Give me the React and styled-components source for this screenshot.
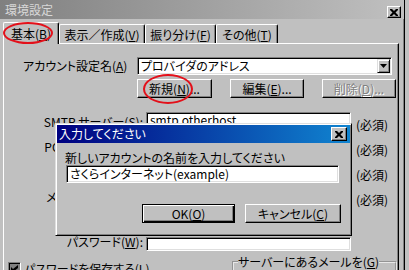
import React from "react";
import styled, { createGlobalStyle } from "styled-components";

const GlobalStyle = createGlobalStyle`
  html, body { margin: 0; padding: 0; background: #c0c0c0; }
  body {
    font-family: "Noto Sans CJK JP", "Liberation Sans", sans-serif;
    font-size: 12px;
    color: #000;
  }
`;

const Win = styled.div`
  position: relative;
  width: 405px;
  height: 270px;
  overflow: hidden;
  box-sizing: border-box;
  background: #c0c0c0;
  border-right: 1px solid #000;
  box-shadow: inset -1px 0 #808080;
  display: flex;
  flex-direction: column;
  line-height: 14px;
  font-feature-settings: "palt";
`;

const TitleBar = styled.div`
  flex: none;
  height: ${p => p.$h}px;
  display: flex;
  align-items: center;
  justify-content: space-between;
  padding: 0 3px 0 ${p => p.$pl}px;
  background: ${p => p.$active
    ? "linear-gradient(90deg, #000080, #1084d0)"
    : "linear-gradient(90deg, #808080, #c0c0c0)"};
  color: ${p => p.$active ? "#fff" : "#d8d8d8"};
  white-space: nowrap;
`;

const CloseBtn = styled.div`
  width: ${p => p.$w}px;
  height: ${p => p.$h}px;
  box-sizing: border-box;
  align-self: ${p => p.$bottom ? "flex-end" : "center"};
  margin-bottom: ${p => p.$bottom ? 1 : 0}px;
  background: #c0c0c0;
  border: 1px solid;
  border-color: #fff #000 #000 #fff;
  box-shadow: inset -1px -1px #808080;
  display: flex;
  align-items: center;
  justify-content: center;
`;

const XMark = () => (
  <svg width="8" height="7" viewBox="0 0 8 7">
    <path d="M0 0h2l2 2 2-2h2v1L5.5 3.5 8 6v1H6L4 5 2 7H0V6l2.5-2.5L0 1z" fill="#000" />
  </svg>
);

const TabStrip = styled.div`
  flex: none;
  height: 24px;
  display: flex;
  align-items: flex-end;
  padding-left: 3px;
  position: relative;
  z-index: 1;
`;

const Tab = styled.div`
  width: ${p => p.$w}px;
  height: ${p => p.$active ? 22 : 19}px;
  margin-bottom: ${p => p.$active ? -1 : 0}px;
  box-sizing: border-box;
  background: #c0c0c0;
  border-top: 1px solid #fff;
  border-left: 1px solid #fff;
  border-right: 1px solid #000;
  border-radius: 2px 2px 0 0;
  box-shadow: inset -1px 0 #808080;
  display: flex;
  align-items: center;
  justify-content: center;
  padding-top: ${p => p.$active ? 0 : 1}px;
  white-space: nowrap;
`;

const Panel = styled.div`
  flex: 1;
  margin-left: 3px;
  width: 396px;
  box-sizing: border-box;
  border-top: 1px solid #fff;
  border-left: 1px solid #fff;
  border-right: 1px solid #000;
  box-shadow: inset -1px 0 #808080;
`;

const AccountRow = styled.div`
  display: flex;
  align-items: center;
  margin-top: 13px;
  padding-left: 19px;
`;

const RowLabel = styled.div`
  width: 114px;
  white-space: nowrap;
`;

const Sunken = styled.div`
  box-sizing: border-box;
  width: ${p => p.$w}px;
  height: ${p => p.$h}px;
  background: #fff;
  border: 1px solid;
  border-color: #808080 #fff #fff #808080;
  box-shadow: inset 1px 1px #000, inset -1px -1px #dfdfdf;
  padding: 0 2px 0 3px;
  display: flex;
  align-items: center;
  white-space: nowrap;
  overflow: hidden;
  margin-left: ${p => p.$ml || 0}px;
`;

const ComboText = styled.div`
  flex: 1;
  line-height: 12px;
`;

const DropBtn = styled.div`
  width: 13px;
  height: 14px;
  box-sizing: border-box;
  background: #c0c0c0;
  border: 1px solid;
  border-color: #dfdfdf #000 #000 #dfdfdf;
  box-shadow: inset 1px 1px #fff, inset -1px -1px #808080;
  display: flex;
  align-items: center;
  justify-content: center;
  margin-right: -1px;
`;

const ButtonRow = styled.div`
  display: flex;
  gap: 18px;
  margin-top: 4px;
  padding-left: 133px;
`;

const Button = styled.div`
  width: ${p => p.$w}px;
  height: 19px;
  box-sizing: border-box;
  background: #c0c0c0;
  border: 1px solid;
  border-color: ${p => p.$default ? "#000" : "#fff #000 #000 #fff"};
  box-shadow: ${p => p.$default
    ? "inset 1px 1px #fff, inset -1px -1px #000, inset -2px -2px #808080"
    : "inset -1px -1px #808080"};
  display: flex;
  align-items: center;
  justify-content: center;
  white-space: nowrap;
  color: ${p => p.$disabled ? "#808080" : "#000"};
  text-shadow: ${p => p.$disabled ? "1px 1px #fff" : "none"};
`;

const U = styled.span`
  text-decoration: underline;
  text-underline-offset: 1px;
`;

const FieldGrid = styled.div`
  display: grid;
  grid-template-columns: 142px 205px 1fr;
  grid-auto-rows: 14px;
  row-gap: 11px;
  margin-top: 14px;
`;

const FieldLabel = styled.div`
  text-align: right;
  padding-right: 3px;
  white-space: nowrap;
  margin-top: ${p => p.$dy}px;
`;

const FieldText = styled.div`
  line-height: 11px;
  padding-top: 0;
`;

const Required = styled.div`
  padding-left: 5px;
  padding-top: 6px;
  white-space: nowrap;
`;

const BottomRow = styled.div`
  display: flex;
  align-items: flex-start;
  margin-top: 11px;
  padding-left: 4px;
`;

const CheckLabel = styled.div`
  display: flex;
  gap: 3px;
  white-space: nowrap;
`;

const CheckBox = styled.div`
  width: 13px;
  height: 13px;
  box-sizing: border-box;
  background: #808080;
  border: 1px solid;
  border-color: #808080 #fff #fff #808080;
  box-shadow: inset 1px 1px #000;
  display: flex;
  align-items: center;
  justify-content: center;
`;

const GroupBox = styled.fieldset`
  margin: -7px 1px 0 auto;
  width: 165px;
  height: 40px;
  box-sizing: border-box;
  padding: 0 4px;
  border: 2px groove #e8e8e8;
  & > legend {
    padding: 0;
    line-height: 14px;
  }
`;

const Dialog = styled.div`
  position: absolute;
  left: 55px;
  top: 123px;
  width: 297px;
  height: 113px;
  box-sizing: border-box;
  background: #c0c0c0;
  border: 1px solid;
  border-color: #dfdfdf #000 #000 #dfdfdf;
  box-shadow: inset 1px 1px #fff, inset -1px -1px #808080;
  padding: 1px;
  display: flex;
  flex-direction: column;
  z-index: 2;
`;

const DialogBody = styled.div`
  padding: 8px 9px 0 8px;
  display: flex;
  flex-direction: column;
`;

const DialogButtons = styled.div`
  display: flex;
  justify-content: flex-end;
  gap: 10px;
  margin-top: 21px;
`;

const Ellipse = styled.div`
  position: absolute;
  left: ${p => p.$x}px;
  top: ${p => p.$y}px;
  width: ${p => p.$w}px;
  height: ${p => p.$h}px;
  box-sizing: border-box;
  border: 2px solid #e3101a;
  border-radius: 50%;
  z-index: 3;
  pointer-events: none;
`;

const fields = [
  { label: <>SMTP サーバー(<U>S</U>):</>, value: "smtp.otherhost", req: true, dy: 3 },
  { label: <>POP3 サーバー(<U>P</U>):</>, value: "", req: true, dy: 3 },
  { label: <>名前(<U>Y</U>):</>, value: "", req: true, dy: 3 },
  { label: <>メールアドレス(<U>M</U>):</>, value: "", req: true, dy: 3 },
  { label: <>ユーザー名(<U>U</U>):</>, value: "", req: false, dy: 3 },
  { label: <>パスワード(<U>W</U>):</>, value: "", req: false, dy: -2 },
];

export default function App() {
  return (
    <>
      <GlobalStyle />
      <Win>
        <TitleBar $h={19} $pl={5}>
          <span>環境設定</span>
          <CloseBtn $w={14} $h={12} $bottom><XMark /></CloseBtn>
        </TitleBar>

        <TabStrip>
          <Tab $w={56} $active>基本(<U>B</U>)</Tab>
          <Tab $w={86}>表示／作成(<U>V</U>)</Tab>
          <Tab $w={71}>振り分け(<U>F</U>)</Tab>
          <Tab $w={62}>その他(<U>T</U>)</Tab>
        </TabStrip>

        <Panel>
          <AccountRow>
            <RowLabel>アカウント設定名(<U>A</U>)</RowLabel>
            <Sunken $w={255} $h={18}>
              <ComboText>プロバイダのアドレス</ComboText>
              <DropBtn>
                <svg width="7" height="4" viewBox="0 0 7 4"><path d="M0 0h7L3.5 4z" fill="#000" /></svg>
              </DropBtn>
            </Sunken>
          </AccountRow>

          <ButtonRow>
            <Button $w={75}>新規(<U>N</U>)...</Button>
            <Button $w={74}>編集(<U>E</U>)...</Button>
            <Button $w={74} $disabled>削除(<U>D</U>)...</Button>
          </ButtonRow>

          <FieldGrid>
            {fields.map((f, i) => (
              <React.Fragment key={i}>
                <FieldLabel $dy={f.dy}>{f.label}</FieldLabel>
                <Sunken $w={205} $h={14}>
                  <FieldText>{f.value}</FieldText>
                </Sunken>
                <Required>{f.req ? "(必須)" : ""}</Required>
              </React.Fragment>
            ))}
          </FieldGrid>

          <BottomRow>
            <CheckLabel>
              <CheckBox>
                <svg width="7" height="7" viewBox="0 0 7 7"><path d="M0 2l2 2 5-4v3L2 7 0 5z" fill="#000" /></svg>
              </CheckBox>
              <span>パスワードを保存する(<U>L</U>)</span>
            </CheckLabel>
            <GroupBox>
              <legend>サーバーにあるメールを(<U>G</U>)</legend>
            </GroupBox>
          </BottomRow>
        </Panel>

        <Dialog>
          <TitleBar $h={18} $pl={2} $active>
            <span>入力してください</span>
            <CloseBtn $w={16} $h={14}><XMark /></CloseBtn>
          </TitleBar>
          <DialogBody>
            <div>新しいアカウントの名前を入力してください</div>
            <Sunken $w={273} $h={18} $ml={1}>さくらインターネット(example)</Sunken>
            <DialogButtons>
              <Button $w={93} $default>OK(<U>O</U>)</Button>
              <Button $w={96}>キャンセル(<U>C</U>)</Button>
            </DialogButtons>
          </DialogBody>
        </Dialog>

        <Ellipse $x={3} $y={22} $w={50} $h={22} />
        <Ellipse $x={143} $y={74} $w={50} $h={30} />
      </Win>
    </>
  );
}
